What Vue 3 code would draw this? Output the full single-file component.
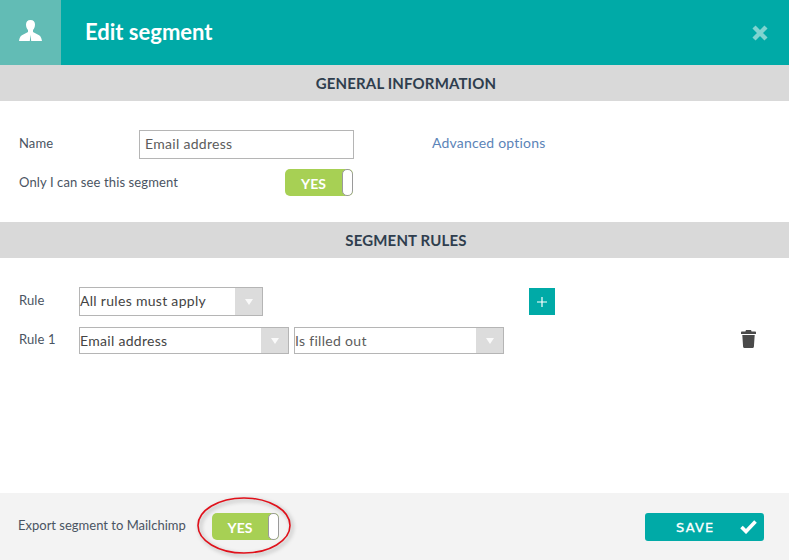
<script setup>
const ruleOneFields = [
  { text: 'Email address', cls: 'sel-wide' },
  { text: 'Is filled out', cls: 'sel-wide sel-gray' }
]
</script>

<template>
  <div class="dialog">
    <header class="head">
      <div class="head-icon">
        <svg width="23" height="21" viewBox="0 0 23 21">
          <path fill="#fff" d="M11.500 0c3 0 4.500 2 4.500 4.600 0 2.400-.9 4.400-2 5.500v2l5.600 2.900c1.500.8 2.600 1.600 3.400 6h-10.800l-.7-6.200-.7 6.200H0c.8-4.400 1.900-5.200 3.400-6L9 12.100v-2C7.900 9 7 7 7 4.600 7 2 8.500 0 11.500 0z"/>
        </svg>
      </div>
      <h1 class="title">Edit segment</h1>
      <svg class="close" width="16" height="16" viewBox="0 0 16 16">
        <path stroke="#7fd4d0" stroke-width="4.400" d="M2 2l12 12M14 2L2 14"/>
      </svg>
    </header>

    <div class="bar">GENERAL INFORMATION</div>
    <section class="general">
      <div class="name-row">
        <span class="label name-label">Name</span>
        <div class="input">Email address</div>
        <a class="advanced">Advanced options</a>
      </div>
      <div class="only-row">
        <span class="label only-label">Only I can see this segment</span>
        <div class="toggle"><span class="yes">YES</span><span class="knob"></span></div>
      </div>
    </section>

    <div class="bar">SEGMENT RULES</div>
    <section class="rules">
      <div class="rule-row">
        <span class="label rule-label">Rule</span>
        <div class="sel sel-main">
          <span class="sel-text">All rules must apply</span>
          <span class="arrow"><i></i></span>
        </div>
        <button class="add">
          <svg width="12" height="12" viewBox="0 0 12 12">
            <path stroke="#fff" stroke-width="1.200" d="M6 1v10M1 6h10"/>
          </svg>
        </button>
      </div>
      <div class="rule-row rule-one">
        <span class="label rule-label">Rule 1</span>
        <div v-for="f in ruleOneFields" :key="f.text" class="sel" :class="f.cls">
          <span class="sel-text">{{ f.text }}</span>
          <span class="arrow"><i></i></span>
        </div>
        <svg class="trash" width="15" height="18" viewBox="0 0 15 18">
          <path fill="#4a4a4a" d="M5 0h5l.6 1.500H14c.6 0 1 .4 1 1v1.500H0V2.500c0-.6.400-1 1-1h3.400zM1.300 5h12.400l-.8 11.800c0 .7-.5 1.200-1.200 1.200H3.300c-.7 0-1.200-.5-1.200-1.200z"/>
        </svg>
      </div>
    </section>

    <footer class="foot">
      <span class="label foot-label">Export segment to Mailchimp</span>
      <div class="foot-toggle">
        <div class="toggle"><span class="yes">YES</span><span class="knob"></span></div>
        <svg class="ring" width="104" height="72" viewBox="0 0 104 72">
          <ellipse cx="47" cy="31.500" rx="46" ry="27.500" fill="none" stroke="#e0101a" stroke-width="1.600"/>
        </svg>
      </div>
      <button class="save">
        <span class="save-text">SAVE</span>
        <svg class="check" width="17" height="14" viewBox="0 0 17 14">
          <path fill="none" stroke="#fff" stroke-width="3.600" d="M1.500 7l4.500 4.500L15.500 1.500"/>
        </svg>
      </button>
    </footer>
  </div>
</template>

<style scoped>
.dialog {
  width: 789px;
  height: 560px;
  display: flex;
  flex-direction: column;
  background: #fff;
  font-family: Lato, "Liberation Sans", sans-serif;
  color: #4a5462;
  overflow: hidden;
}
.head {
  height: 65px;
  flex: none;
  display: flex;
  align-items: center;
  background: #00aaa7;
}
.head-icon {
  width: 61px;
  height: 65px;
  background: #62bcb5;
  display: flex;
  align-items: center;
  justify-content: center;
  padding-bottom: 4px;
  box-sizing: border-box;
}
.title {
  margin: -3px 0 0 24px;
  flex: 1;
  font-size: 22px;
  font-weight: 700;
  color: #fff;
}
.close {
  margin-right: 21px;
}
.bar {
  height: 36px;
  flex: none;
  display: flex;
  align-items: center;
  justify-content: center;
  padding-left: 23px;
  padding-bottom: 1px;
  box-sizing: border-box;
  background: #d9d9d9;
  color: #2f3e4e;
  font-size: 15px;
  font-weight: 700;
  letter-spacing: 0.15px;
}
.label {
  font-size: 13px;
  letter-spacing: 0.12px;
  color: #4a5462;
}
.general {
  height: 121px;
  flex: none;
  padding: 29px 0 0 19px;
  box-sizing: border-box;
}
.name-row {
  display: flex;
  align-items: center;
  height: 29px;
}
.name-label {
  width: 120px;
  margin-top: -3px;
}
.input {
  width: 215px;
  height: 29px;
  box-sizing: border-box;
  border: 1px solid #b5b5b5;
  padding-left: 5px;
  line-height: 26px;
  font-size: 14px;
  letter-spacing: 0.3px;
  color: #5c5c5c;
}
.advanced {
  margin-left: 78px;
  margin-top: -4px;
  font-size: 14px;
  letter-spacing: 0.2px;
  color: #5b84b8;
}
.only-row {
  display: flex;
  align-items: center;
  margin-top: 10px;
}
.only-label {
  width: 266px;
  margin-top: -1px;
}
.toggle {
  width: 68px;
  height: 27px;
  box-sizing: border-box;
  display: flex;
  align-items: center;
  background: #a7d054;
  border-radius: 5px;
  overflow: hidden;
}
.yes {
  flex: 1;
  text-align: center;
  color: #fff;
  font-size: 14px;
  font-weight: 700;
  padding-top: 2px;
}
.knob {
  width: 11px;
  height: 27px;
  box-sizing: border-box;
  background: #fff;
  border: 1px solid #9a9a9a;
  border-radius: 5px;
}
.rules {
  flex: 1;
  padding: 29px 0 0 19px;
}
.rule-row {
  display: flex;
  align-items: center;
  height: 29px;
}
.rule-label {
  width: 60px;
  margin-top: -3px;
}
.rule-one {
  margin-top: 11px;
  height: 27px;
}
.sel {
  height: 29px;
  box-sizing: border-box;
  border: 1px solid #b5b5b5;
  display: flex;
  align-items: stretch;
  background: #fff;
}
.sel-main {
  width: 184px;
}
.sel-wide {
  width: 210px;
  height: 27px;
}
.sel-gray {
  margin-left: 5px;
}
.sel-text {
  flex: 1;
  padding-left: 0;
  font-size: 14px;
  letter-spacing: 0.3px;
  line-height: 25px;
  color: #444;
}
.sel-main .sel-text {
  line-height: 26px;
}
.sel-gray .sel-text {
  color: #5c5c5c;
}
.arrow {
  width: 27px;
  background: #dcdcdc;
  display: flex;
  align-items: center;
  justify-content: center;
}
.arrow i {
  width: 0;
  height: 0;
  border-left: 4px solid transparent;
  border-right: 4px solid transparent;
  border-top: 6px solid #fafafa;
}
.add {
  width: 26px;
  height: 27px;
  margin-left: 266px;
  padding: 0;
  border: 0;
  background: #00aaa7;
  display: flex;
  align-items: center;
  justify-content: center;
}
.trash {
  margin-left: 237px;
  margin-top: -3px;
}
.foot {
  height: 67px;
  flex: none;
  display: flex;
  align-items: center;
  padding-left: 18px;
  background: #f3f3f3;
}
.foot-label {
  width: 194px;
  margin-top: -3px;
  letter-spacing: 0;
  color: #4a5462;
}
.foot-toggle {
  position: relative;
  display: flex;
}
.foot-toggle .toggle {
  width: 67px;
}
.ring {
  position: absolute;
  left: -15px;
  top: -19px;
  pointer-events: none;
  filter: drop-shadow(2px 2px 2px rgba(0, 0, 0, 0.35));
}
.save {
  width: 119px;
  height: 28px;
  margin-left: 366px;
  padding: 0;
  border: 0;
  border-radius: 3px;
  background: #00aaa7;
  position: relative;
  display: flex;
  align-items: center;
}
.save-text {
  margin-left: 31px;
  margin-top: 2px;
  color: #fff;
  font-family: "DejaVu Sans", sans-serif;
  font-size: 13px;
  font-weight: 400;
  letter-spacing: 1.2px;
  -webkit-text-stroke: 0.3px #fff;
}
.check {
  position: absolute;
  right: 7px;
  top: 7px;
}
</style>
